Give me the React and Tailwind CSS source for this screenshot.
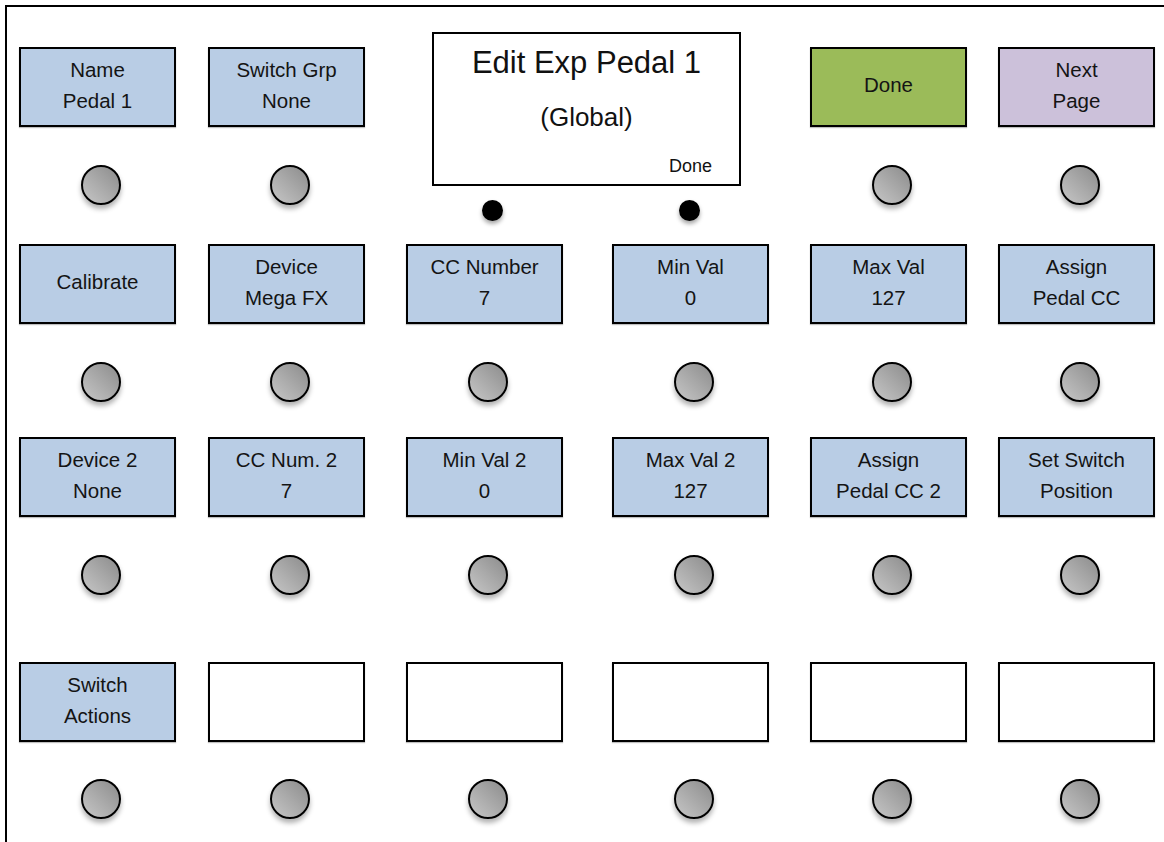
import React from 'react'

const BLUE = 'bg-[#b9cde5]'

// one key: label box + round knob under it
function Key({ lines = [], fill = BLUE, knobGap = 'mt-[38px]' }) {
  return (
    <div className="flex flex-col items-start">
      <div
        className={`w-[157px] h-[80px] border-2 border-black ${fill} flex flex-col items-center justify-center pb-[5px] text-[20.5px] leading-[31px] text-[#141414] shadow-[0_1px_1px_rgba(0,0,0,0.25)]`}
      >
        {lines.map((l, i) => (
          <span key={i}>{l}</span>
        ))}
      </div>
      <Knob className={knobGap} />
    </div>
  )
}

function Knob({ className = '' }) {
  return (
    <div
      className={`ml-[62px] w-[40px] h-[40px] rounded-full border-2 border-black bg-linear-to-tr from-[#c6c6c6] via-[#a9a9a9] to-[#8c8c8c] shadow-[0_4px_5px_rgba(0,0,0,0.3)] ${className}`}
    />
  )
}

function Dot() {
  return <div className="w-[21px] h-[21px] rounded-full bg-black shadow-[0_3px_4px_rgba(0,0,0,0.35)]" />
}

const cols = 'grid grid-cols-[189px_198px_206px_198px_188px_156px] items-start'

export default function App() {
  return (
    <div className="w-[1164px] h-[842px] bg-white overflow-hidden" style={{ fontFamily: '"Liberation Sans", Arial, sans-serif' }}>
      <div className="ml-[5px] mt-[5px] h-[837px] border-l-2 border-t-2 border-black pl-[12px] pt-[25px]">
        {/* row 1 */}
        <div className={`${cols} h-[212px]`}>
          <div className="pt-[15px]"><Key lines={['Name', 'Pedal 1']} /></div>
          <div className="pt-[15px]"><Key lines={['Switch Grp', 'None']} /></div>
          <div className="col-span-2 pl-[26px] flex flex-col">
            <div className="w-[309px] h-[154px] border-2 border-black bg-white flex flex-col items-center text-[#111]">
              <span className="mt-[12px] text-[31px] leading-[34px]">Edit Exp Pedal 1</span>
              <span className="mt-[22px] text-[26px] leading-[30px]">(Global)</span>
              <span className="self-end mr-[27px] mt-[24px] text-[18px] leading-[20px]">Done</span>
            </div>
            <div className="flex gap-[176px] pl-[50px] mt-[14px]">
              <Dot />
              <Dot />
            </div>
          </div>
          <div className="pt-[15px]"><Key lines={['Done']} fill="bg-[#9bbb59]" /></div>
          <div className="pt-[15px]"><Key lines={['Next', 'Page']} fill="bg-[#ccc1da]" /></div>
        </div>

        {/* row 2 */}
        <div className={`${cols} h-[193px]`}>
          <Key lines={['Calibrate']} />
          <Key lines={['Device', 'Mega FX']} />
          <Key lines={['CC Number', '7']} />
          <Key lines={['Min Val', '0']} />
          <Key lines={['Max Val', '127']} />
          <Key lines={['Assign', 'Pedal CC']} />
        </div>

        {/* row 3 */}
        <div className={`${cols} h-[225px]`}>
          <Key lines={['Device 2', 'None']} />
          <Key lines={['CC Num. 2', '7']} />
          <Key lines={['Min Val 2', '0']} />
          <Key lines={['Max Val 2', '127']} />
          <Key lines={['Assign', 'Pedal CC 2']} />
          <Key lines={['Set Switch', 'Position']} />
        </div>

        {/* row 4 */}
        <div className={cols}>
          <Key lines={['Switch', 'Actions']} knobGap="mt-[37px]" />
          <Key fill="bg-white" knobGap="mt-[37px]" />
          <Key fill="bg-white" knobGap="mt-[37px]" />
          <Key fill="bg-white" knobGap="mt-[37px]" />
          <Key fill="bg-white" knobGap="mt-[37px]" />
          <Key fill="bg-white" knobGap="mt-[37px]" />
        </div>
      </div>
    </div>
  )
}
